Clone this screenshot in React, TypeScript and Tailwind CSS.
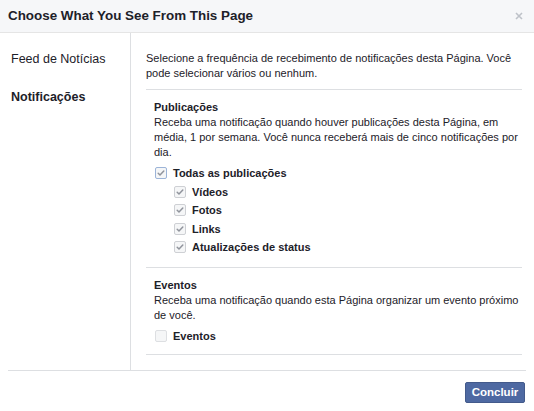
import React from "react";

function Box({ checked, focused, muted }: { checked?: boolean; focused?: boolean; muted?: boolean }) {
  const border = focused ? "border-[#9cb4d8]" : muted ? "border-[#dddfe2]" : "border-[#ced0d4]";
  return (
    <span
      className={`w-[12px] h-[12px] rounded-[2px] border ${border} bg-[#f5f6f7] flex items-center justify-center shrink-0`}
    >
      {checked && (
        <svg width="10" height="10" viewBox="0 0 10 10">
          <path d="M2.2 5.2 L4 7 L7.8 3" fill="none" stroke="#90949c" strokeWidth="1.5" strokeLinecap="round" strokeLinejoin="round" />
        </svg>
      )}
    </span>
  );
}

function Row({ label, checked, focused, indent, muted }: { label: string; checked?: boolean; focused?: boolean; indent?: boolean; muted?: boolean }) {
  return (
    <div className={`h-[18.5px] flex items-center gap-[6px] ${indent ? "ml-[20px]" : "ml-[1px]"}`}>
      <Box checked={checked} focused={focused} muted={muted} />
      <span className="text-[11px] font-bold text-[#1d2129]">{label}</span>
    </div>
  );
}

export default function App() {
  return (
    <div
      className="w-[534px] h-[411px] bg-white flex flex-col text-[#1d2129]"
      style={{ fontFamily: '"Liberation Sans", Arial, Helvetica, sans-serif' }}
    >
      <div className="h-[33px] bg-[#f6f7f9] border-b border-[#e5e5e5] flex items-center justify-between pl-[8px] pr-[11px] shrink-0">
        <span className="text-[13.4px] font-bold">Choose What You See From This Page</span>
        <svg width="8" height="8" viewBox="0 0 8 8">
          <path d="M1 1 L7 7 M7 1 L1 7" stroke="#bec2c9" strokeWidth="1.6" />
        </svg>
      </div>
      <div className="flex h-[337px] shrink-0">
        <div className="w-[131px] border-r border-[#dddfe2] pl-[11px] pt-[18px] flex flex-col gap-[22px] shrink-0">
          <div className="text-[12.5px] leading-[16px]">Feed de Notícias</div>
          <div className="text-[12.5px] leading-[16px] font-bold">Notificações</div>
        </div>
        <div className="flex-1 pl-[15px] pr-[12px]">
          <div className="pt-[18px] pb-[8px] border-b border-[#dddfe2] text-[11px] leading-[15px]">
            Selecione a frequência de recebimento de notificações desta Página. Você pode selecionar vários ou nenhum.
          </div>
          <div className="pl-[8px] pr-[1px] pt-[10px] pb-[10px] border-b border-[#dddfe2]">
            <div className="text-[11px] leading-[15px] font-bold">Publicações</div>
            <div className="text-[11px] leading-[15px]">
              Receba uma notificação quando houver publicações desta Página, em média, 1 por semana. Você nunca receberá mais de cinco notificações por dia.
            </div>
            <div className="mt-[4px] flex flex-col">
              <Row label="Todas as publicações" checked focused />
              <Row label="Vídeos" checked indent />
              <Row label="Fotos" checked indent />
              <Row label="Links" checked indent />
              <Row label="Atualizações de status" checked indent />
            </div>
          </div>
          <div className="pl-[8px] pr-[1px] pt-[10px] pb-[9px] border-b border-[#dddfe2]">
            <div className="text-[11px] leading-[15px] font-bold">Eventos</div>
            <div className="text-[11px] leading-[15px]">
              Receba uma notificação quando esta Página organizar um evento próximo de você.
            </div>
            <div className="mt-[4px] flex flex-col">
              <Row label="Eventos" muted />
            </div>
          </div>
        </div>
      </div>
      <div className="mx-[8px] border-t border-[#dddfe2] pt-[11px] flex justify-end pr-[1px]">
        <button className="w-[60px] h-[21px] bg-[#4e69a2] border border-[#435a8b] rounded-[2px] text-white text-[11.5px] font-bold flex items-center justify-center">
          Concluir
        </button>
      </div>
    </div>
  );
}
